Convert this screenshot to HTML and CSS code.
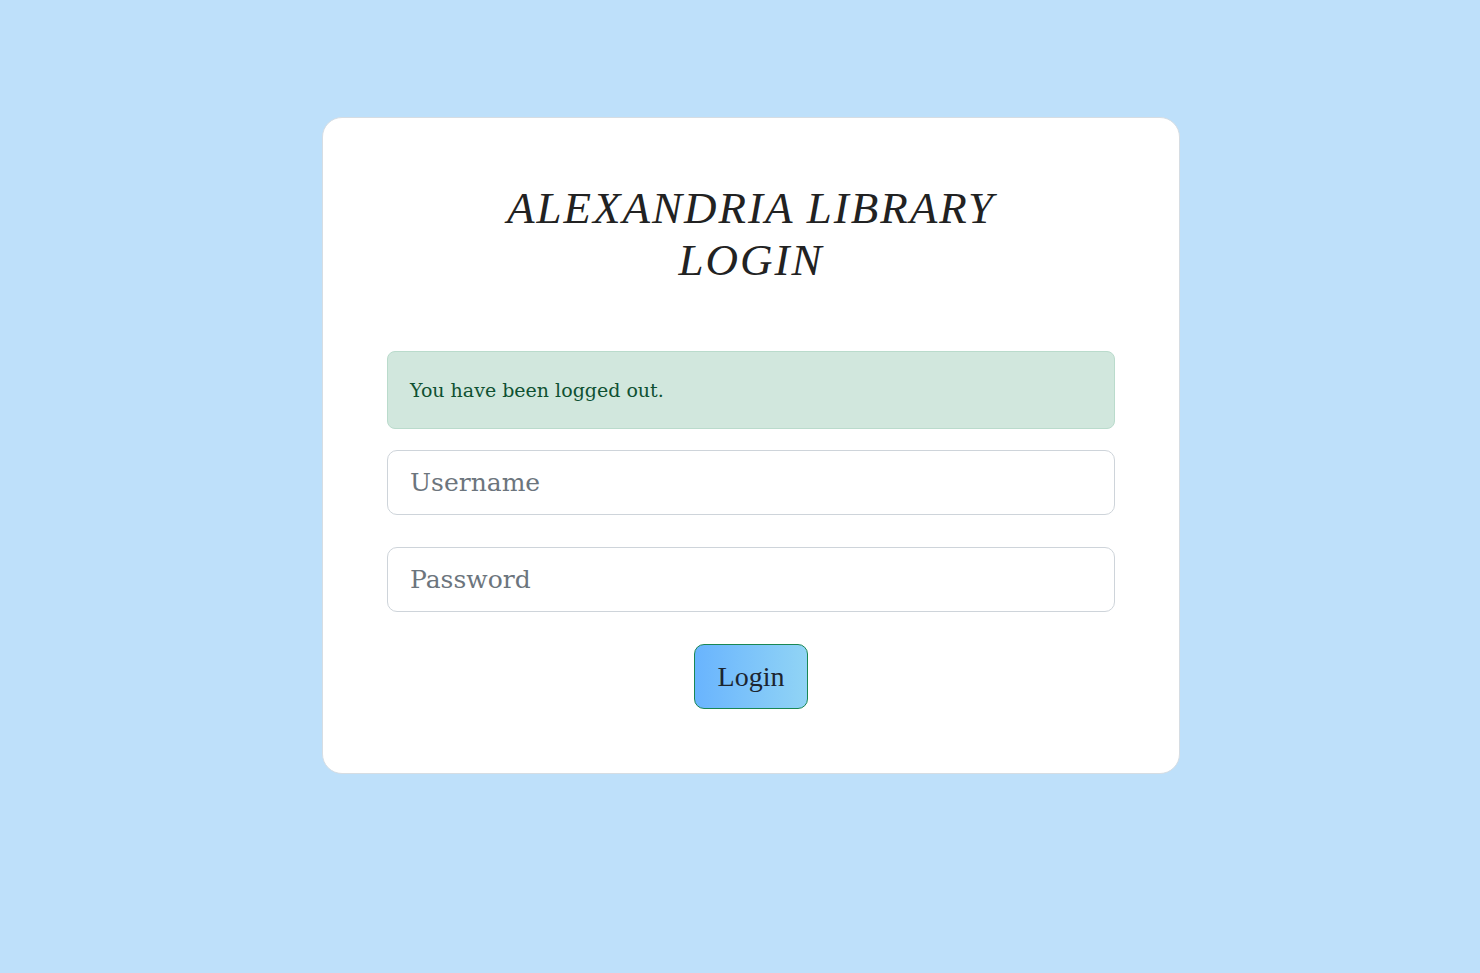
FILE: index.html
```html
<!DOCTYPE html>
<html lang="en">
<head>
<meta charset="utf-8">
<title>Alexandria Library Login</title>
<link rel="stylesheet" href="styles.css">
</head>
<body>
<main class="page">
  <section class="card">
    <h1 class="title">Alexandria Library<br>Login</h1>
    <div class="alert">You have been logged out.</div>
    <form class="form">
      <input class="field" type="text" placeholder="Username">
      <input class="field" type="password" placeholder="Password">
      <div class="actions">
        <button class="btn" type="button">Login</button>
      </div>
    </form>
  </section>
</main>
</body>
</html>
```
FILE: styles.css
```css
html, body {
  margin: 0;
  padding: 0;
}
body {
  background: #bee0fa;
  min-height: 973px;
  font-family: "DejaVu Serif", "Liberation Serif", serif;
}
.page {
  display: flex;
  justify-content: center;
  padding-top: 117px;
  padding-left: 22px;
}
.card {
  box-sizing: border-box;
  width: 858px;
  height: 657px;
  background: #fff;
  border: 1px solid #d6dde3;
  border-radius: 20px;
  padding: 64px 64px 64px;
}
.title {
  margin: 0 0 65px;
  text-align: center;
  font-family: "Liberation Serif", serif;
  font-style: italic;
  font-weight: normal;
  text-transform: uppercase;
  font-size: 45px;
  line-height: 52px;
  letter-spacing: 2px;
  color: #222;
}
.alert {
  box-sizing: border-box;
  height: 78px;
  display: flex;
  align-items: center;
  padding: 0 22px;
  background: #d1e7dd;
  border: 1px solid #badbcc;
  border-radius: 8px;
  color: #0f5132;
  font-size: 19px;
  margin-bottom: 21px;
}
.form {
  display: flex;
  flex-direction: column;
  gap: 32px;
}
.field {
  box-sizing: border-box;
  height: 65px;
  width: 100%;
  padding: 0 22px;
  border: 1px solid #ced4da;
  border-radius: 10px;
  font-family: "DejaVu Serif", "Liberation Serif", serif;
  font-size: 25px;
  color: #212529;
  background: #fff;
}
.field::placeholder {
  color: #6c757d;
}
.actions {
  display: flex;
  justify-content: center;
}
.btn {
  box-sizing: border-box;
  width: 114px;
  height: 65px;
  border: 1px solid #198754;
  border-radius: 10px;
  background: linear-gradient(to right, #69b4fe, #91d4f5);
  font-family: "Liberation Serif", serif;
  font-size: 28px;
  color: #1c2530;
  cursor: pointer;
}
```
